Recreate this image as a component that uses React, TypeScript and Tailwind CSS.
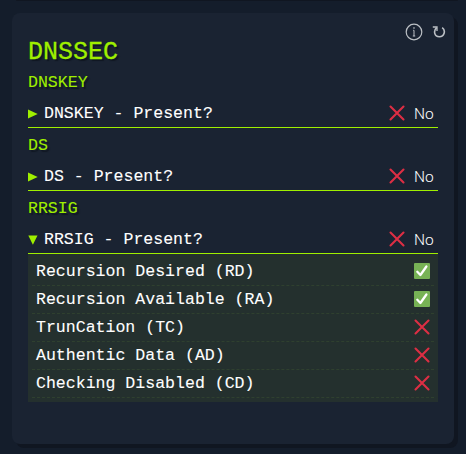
const MONO = "font-['Liberation_Mono',monospace]";

function Cross({ className = '' }: { className?: string }) {
  return (
    <svg viewBox="0 0 16 16" className={`size-4 shrink-0 ${className}`} fill="none" stroke="#dd2e44" strokeWidth="2.1" strokeLinecap="round">
      <path d="M1.5 1.5 14.5 14.5M14.5 1.5 1.5 14.5" />
    </svg>
  );
}

function Check() {
  return (
    <svg viewBox="0 0 16 16" className="size-4 shrink-0">
      <rect width="16" height="16" rx="1" fill="#77b255" />
      <path d="M3.3 8.8 6.4 12 12.4 3.5" fill="none" stroke="#fff" strokeWidth="2.3" strokeLinecap="round" strokeLinejoin="round" />
    </svg>
  );
}

function Section({ name, open = false }: { name: string; open?: boolean }) {
  return (
    <section className="h-[63px]">
      <h3 className={`${MONO} h-[34px] pt-[5px] text-[16.56px] leading-[26px] text-[#9fef00] [text-shadow:2px_2px_1px_#101722] [-webkit-text-stroke:0.1px_#9fef00]`}>
        {name}
      </h3>
      <div className="flex h-[29px] items-center border-b border-[#9fef00]">
        <svg viewBox="0 0 10 10" className="mt-[2px] mr-[6px] size-[10px] shrink-0" fill="#9fef00">
          <path d={open ? 'M0.3 0.5H9.5L4.9 9.7Z' : 'M0 0.5V9.5L9.7 5Z'} />
        </svg>
        <span className={`${MONO} pt-[2px] text-[16.56px] leading-[26px] text-white [-webkit-text-stroke:0.1px_white]`}>{name} - Present?</span>
        <Cross className="ml-auto" />
        <span className="ml-[9px] w-[24px] pt-px font-['Roboto',sans-serif] text-[15.5px] leading-[26px] font-light text-white">No</span>
      </div>
    </section>
  );
}

const flags = [
  { label: 'Recursion Desired (RD)', set: true },
  { label: 'Recursion Available (RA)', set: true },
  { label: 'TrunCation (TC)', set: false },
  { label: 'Authentic Data (AD)', set: false },
  { label: 'Checking Disabled (CD)', set: false },
];

export default function App() {
  return (
    <main className="h-[454px] w-[466px] overflow-hidden bg-[#141d2b]">
      <div className="ml-4 h-[1px] w-[442px] rounded-b-lg bg-[#101621]" />
      <article className="mt-3 ml-3 h-[431px] w-[442px] rounded-lg bg-[#1a2332] px-4 shadow-[4px_4px_0_#101621]">
        <header className="flex h-[52px] items-start justify-between">
          <h2 className={`${MONO} mt-[25px] text-[25px] leading-[30px] text-[#9fef00] [text-shadow:2px_2px_1px_#101722] [-webkit-text-stroke:0.3px_#9fef00]`}>
            DNSSEC
          </h2>
          <div className="mt-[10px] -mr-[9px] flex items-center gap-[9px] text-[#bcc0c5]">
            <svg viewBox="0 0 18 18" className="size-[18px]" fill="none" stroke="currentColor">
              <circle cx="9" cy="9" r="7.8" strokeWidth="1.2" />
              <path d="M9 7.3V13M8.2 7.3H9M7.8 13H10.2" strokeWidth="1" />
              <circle cx="9" cy="5" r="0.4" />
            </svg>
            <svg viewBox="0 0 14 14" className="mr-[1px] size-[14px]" fill="none" stroke="currentColor" strokeWidth="1.6">
              <path d="M10.2 2.6C14 5.4 12.4 11.8 7.4 11.8C2.2 11.8 1.2 5.8 4.6 2.6" />
              <path d="M0.8 2H5V6" strokeWidth="1.3" />
            </svg>
          </div>
        </header>
        <Section name="DNSKEY" />
        <Section name="DS" />
        <Section name="RRSIG" open />
        <ul className="h-[148px] bg-[#24302e] px-1 pt-1">
          {flags.map((flag) => (
            <li key={flag.label} className="flex h-7 items-center justify-between border-b border-dashed border-[#2f402f] px-1">
              <span className={`${MONO} pt-px text-[16.56px] leading-[26px] text-white [-webkit-text-stroke:0.1px_white]`}>{flag.label}</span>
              <span className="pb-px">{flag.set ? <Check /> : <Cross />}</span>
            </li>
          ))}
        </ul>
      </article>
    </main>
  );
}
